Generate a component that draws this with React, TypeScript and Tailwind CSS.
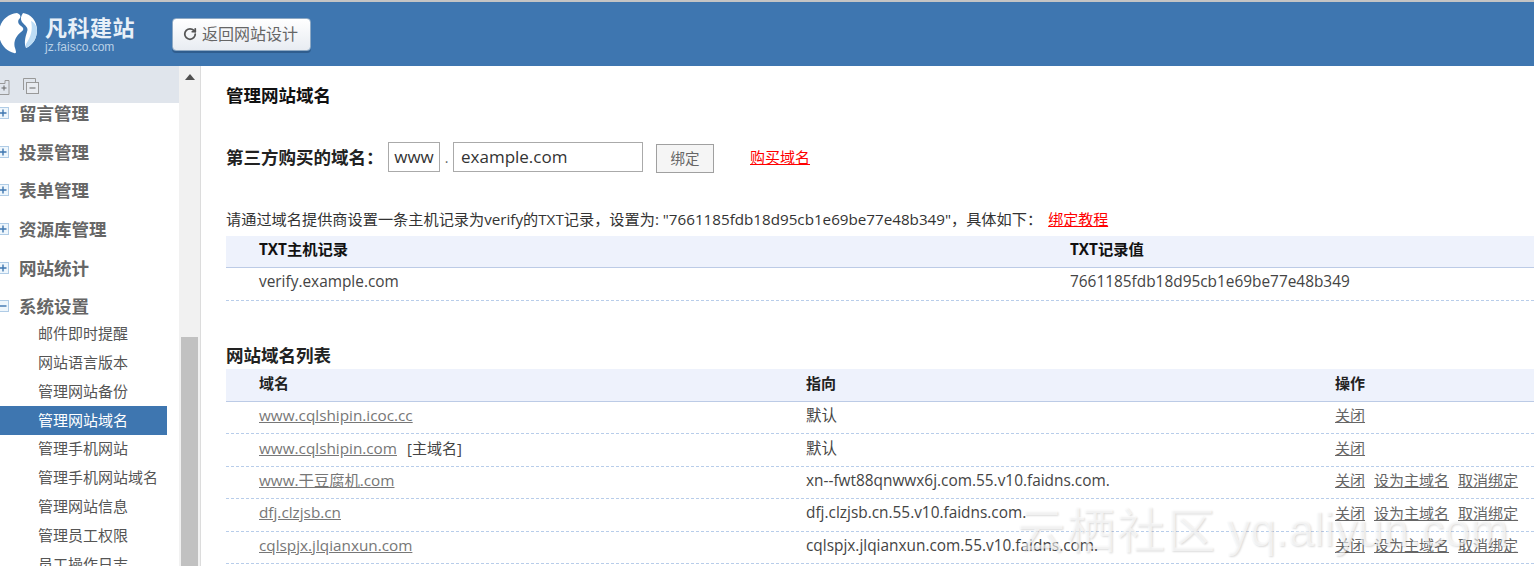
import { RotateCw } from "lucide-react";

const FONT = "font-['Open_Sans','Noto_Sans_CJK_SC',sans-serif]";

const groups = [
  { t: "留言管理", open: false },
  { t: "投票管理", open: false },
  { t: "表单管理", open: false },
  { t: "资源库管理", open: false },
  { t: "网站统计", open: false },
  { t: "系统设置", open: true },
];
const subs = ["邮件即时提醒", "网站语言版本", "管理网站备份", "管理网站域名", "管理手机网站", "管理手机网站域名", "管理网站信息", "管理员工权限", "员工操作日志"];

const rows = [
  { d: "www.cqlshipin.icoc.cc", p: "默认", ops: ["关闭"] },
  { d: "www.cqlshipin.com", main: true, p: "默认", ops: ["关闭"] },
  { d: "www.干豆腐机.com", p: "xn--fwt88qnwwx6j.com.55.v10.faidns.com.", ops: ["关闭", "设为主域名", "取消绑定"] },
  { d: "dfj.clzjsb.cn", p: "dfj.clzjsb.cn.55.v10.faidns.com.", ops: ["关闭", "设为主域名", "取消绑定"] },
  { d: "cqlspjx.jlqianxun.com", p: "cqlspjx.jlqianxun.com.55.v10.faidns.com.", ops: ["关闭", "设为主域名", "取消绑定"] },
];

function Tree({ open }: { open: boolean }) {
  return (
    <svg width="12" height="12" viewBox="0 0 12 12" className="shrink-0">
      <rect x="0.5" y="0.5" width="11" height="11" fill="#eef6fc" stroke="#b0cce6" />
      <path d={open ? "M2.5 6h7" : "M2.5 6h7M6 2.5v7"} stroke="#3e76b0" strokeWidth="1.4" />
    </svg>
  );
}

function Logo() {
  return (
    <svg width="38" height="44" viewBox="0 13 38 44" className="shrink-0 overflow-visible">
      <path d="M17 14C6 15-1 24-1 34c0 11 7 18 15 20 3 1 2-2 1-5-2-6 1-12 6-16 3-2 3-4 0-6-3-2-4-5-1-8 1-2 0-4-3-5Z" fill="#fff" />
      <path d="M23 14c-2 3-3 6-1 9 3 4 7 5 5 10-2 6-3 11-1 16 7-3 11-10 11-18 0-9-6-16-14-17Z" fill="#fff" />
      <path d="M31 22c2 8 0 16-5 23v4c7-3 11-10 11-18 0-4-3-8-6-9Z" fill="#bcdcf5" />
    </svg>
  );
}

export default function App() {
  return (
    <div className={`relative h-[566px] w-[1534px] overflow-hidden bg-white flex flex-col ${FONT}`}>
      <header className="h-[66px] shrink-0 bg-[#3e76b0] border-t-2 border-[#c4c4c4] flex items-center">
        <div className="w-[172px] flex items-center gap-[7px]">
          <Logo />
          <div className="flex flex-col text-white">
            <span className="text-[22px] leading-[25px] font-bold tracking-[0.5px] text-[#e8f0f8]">凡科建站</span>
            <span className="text-[12px] leading-[14px] text-[#b9d0e6] font-['Liberation_Sans',sans-serif]">jz.faisco.com</span>
          </div>
        </div>
        <button className="w-[139px] h-[33px] rounded-[4px] border border-[#8ea9c4] bg-gradient-to-b from-white to-[#e8ecf2] shadow-[0_2px_0_#2f5d8e] flex items-center pl-[10px] gap-[5px] text-[16px] text-[#666]">
          <RotateCw size={14} strokeWidth={3} className="text-[#555]" />
          <span>返回网站设计</span>
        </button>
      </header>
      <div className="flex flex-1 min-h-0">
        <aside className="w-[179px] shrink-0 overflow-hidden flex flex-col">
          <div className="relative z-10 h-[37px] shrink-0 bg-[#e0e5ec] flex items-center gap-[13px]">
            <svg width="10" height="15" viewBox="0 0 10 15" className="mt-[5px]">
              <path d="M-1 3.5h6v-3h4v14H-1z" fill="none" stroke="#999" />
              <path d="M1.5 8h5M4 5.5v5" stroke="#666" />
            </svg>
            <svg width="16" height="16" viewBox="0 0 16 16" className="mt-[3px]">
              <path d="M0.5 12V0.5H12.5V4" fill="none" stroke="#999" />
              <rect x="3.5" y="4.5" width="12" height="11" fill="#e8ebf0" stroke="#999" />
              <path d="M6.5 10h6" stroke="#666" />
            </svg>
          </div>
          <div className="-mt-[9px]">
            {groups.map((g) => (
              <div key={g.t} className="h-[38.6px] flex items-center -ml-[3px]">
                <Tree open={g.open} />
                <span className="ml-[10px] text-[17.5px] font-bold text-[#666]">{g.t}</span>
              </div>
            ))}
            <div className="-mt-[6.4px] w-[167px]">
              {subs.map((s) => {
                const on = s === "管理网站域名";
                return (
                  <div key={s} className={`h-[28.9px] pl-[38px] pb-[1px] flex items-center text-[15px] whitespace-nowrap ${on ? "bg-[#3e76b0] text-white" : "text-[#555]"}`}>
                    {s}
                  </div>
                );
              })}
            </div>
          </div>
        </aside>
        <div className="w-[22px] shrink-0 bg-[#f1f1f1] border-r border-[#dcdcdc] flex flex-col pl-[2px] pr-[2px]">
          <div className="h-[271px] shrink-0 flex justify-center pt-[8px]">
            <svg width="10" height="6" viewBox="0 0 10 6"><path d="M5 0l5 6H0z" fill="#505050" /></svg>
          </div>
          <div className="flex-1 bg-[#c1c1c1]" />
        </div>
        <main className="flex-1 min-w-0 pl-[25px] text-[#333]">
          <h1 className="mt-[17px] h-[25px] leading-[25px] text-[17.5px] font-bold text-[#111]">管理网站域名</h1>
          <div className="mt-[33px] h-[32px] flex items-center">
            <span className="text-[17.5px] font-bold text-[#222] w-[162px] whitespace-nowrap">第三方购买的域名：</span>
            <div className="w-[52px] h-[30px] border border-[#aaa] flex items-center justify-center text-[17px] text-[#333]">www</div>
            <span className="w-[13px] text-center text-[#666] text-[14px]">.</span>
            <div className="w-[190px] h-[30px] border border-[#aaa] pl-[7px] flex items-center text-[17px] text-[#333]">example.com</div>
            <button className="ml-[13px] mt-[3px] w-[58px] h-[29px] border border-[#a0a0a0] bg-[#f5f5f5] text-[14.5px] text-[#666]">绑定</button>
            <a className="ml-[36px] text-[15px] text-[#f00] underline">购买域名</a>
          </div>
          <p className="mt-[36px] h-[22px] leading-[20px] text-[15.2px] text-[#333] whitespace-nowrap">
            请通过域名提供商设置一条主机记录为verify的TXT记录，设置为: "7661185fdb18d95cb1e69be77e48b349"，具体如下：
            <a className="ml-[6px] text-[15px] text-[#f00] underline">绑定教程</a>
          </p>
          <div className="mt-[5px] h-[32px] pb-[4px] bg-[#eef2fc] border-b border-[#bccbe6] flex items-center text-[15.3px] font-bold text-[#111]">
            <span className="ml-[33px] w-[811px]">TXT主机记录</span>
            <span>TXT记录值</span>
          </div>
          <div className="h-[33px] pb-[4px] border-b border-dashed border-[#b8cdea] flex items-center text-[15.4px] text-[#444]">
            <span className="ml-[33px] w-[811px]">verify.example.com</span>
            <span>7661185fdb18d95cb1e69be77e48b349</span>
          </div>
          <h2 className="mt-[43px] h-[25px] leading-[23px] text-[17.5px] font-bold text-[#222]">网站域名列表</h2>
          <div className="h-[33px] pb-[3px] bg-[#eef2fc] border-b border-[#bccbe6] flex items-center text-[15px] font-bold text-[#222]">
            <span className="ml-[33px] w-[547px]">域名</span>
            <span className="w-[529px]">指向</span>
            <span>操作</span>
          </div>
          {rows.map((r) => (
            <div key={r.d} className="h-[32.4px] pb-[4px] border-b border-dashed border-[#b8cdea] flex items-center text-[15px] text-[#444] whitespace-nowrap">
              <span className="ml-[33px] w-[547px]">
                <a className="text-[15.3px] text-[#777] underline">{r.d}</a>
                {r.main && <span className="ml-[10px] text-[#444]">[主域名]</span>}
              </span>
              <span className="w-[529px] text-[15.4px]">{r.p}</span>
              <span className="flex gap-[9px] text-[#666]">
                {r.ops.map((o) => (
                  <a key={o} className="underline">{o}</a>
                ))}
              </span>
            </div>
          ))}
        </main>
      </div>
      <div className="absolute left-[1017px] top-[498px] flex items-center gap-[10px] text-[48px] leading-[64px] whitespace-nowrap text-white/60 [text-shadow:1px_1px_2px_rgba(0,0,0,0.14)] pointer-events-none">
        <span className="tracking-[2px]">云栖社区</span>
        <span className="font-['Liberation_Sans',sans-serif] text-[46px]">yq.aliyun.com</span>
      </div>
    </div>
  );
}
